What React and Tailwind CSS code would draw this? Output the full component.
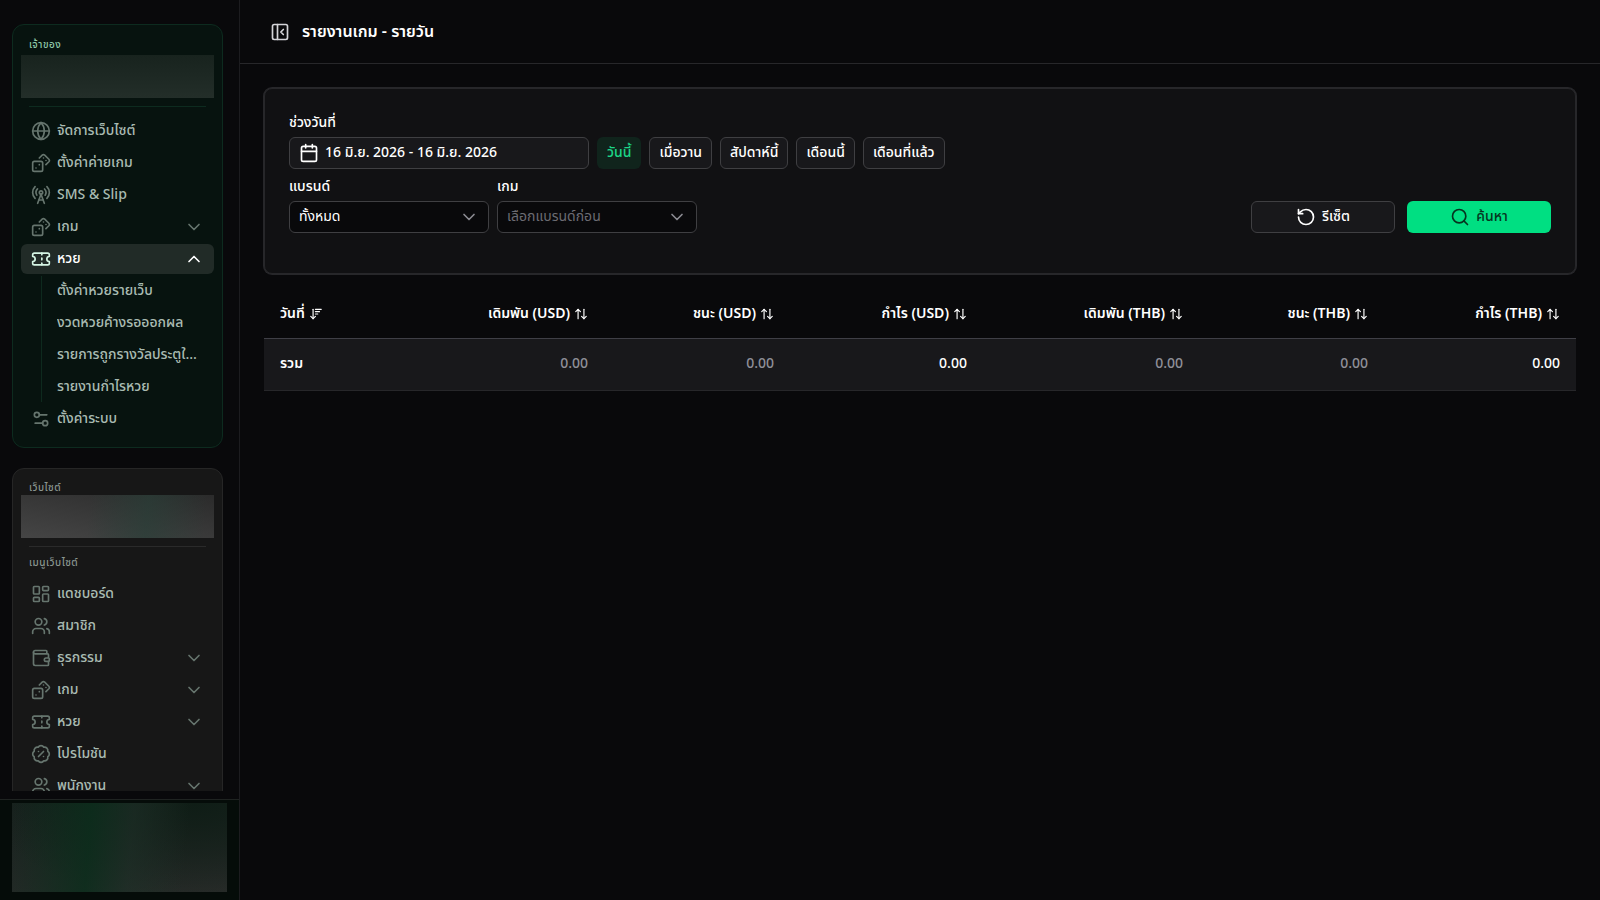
import { useState } from 'react';
import {
  ArrowDownWideNarrow,
  ArrowUpDown,
  BadgePercent,
  Calendar,
  ChevronDown,
  ChevronUp,
  Dices,
  Globe,
  LayoutDashboard,
  PanelLeftClose,
  RadioTower,
  RotateCcw,
  Search,
  Settings2,
  Ticket,
  Users,
  Wallet,
} from 'lucide-react';

const ownerMenu = [
  { label: 'จัดการเว็บไซต์', icon: Globe },
  { label: 'ตั้งค่าค่ายเกม', icon: Dices },
  { label: 'SMS & Slip', icon: RadioTower },
  { label: 'เกม', icon: Dices, expandable: true },
  {
    label: 'หวย',
    icon: Ticket,
    expandable: true,
    children: ['ตั้งค่าหวยรายเว็บ', 'งวดหวยค้างรอออกผล', 'รายการถูกรางวัลประตูใหญ่', 'รายงานกำไรหวย'],
  },
  { label: 'ตั้งค่าระบบ', icon: Settings2 },
];

const siteMenu = [
  { label: 'แดชบอร์ด', icon: LayoutDashboard },
  { label: 'สมาชิก', icon: Users },
  { label: 'ธุรกรรม', icon: Wallet, expandable: true },
  { label: 'เกม', icon: Dices, expandable: true },
  { label: 'หวย', icon: Ticket, expandable: true },
  { label: 'โปรโมชัน', icon: BadgePercent },
  { label: 'พนักงาน', icon: Users, expandable: true },
];

const datePresets = ['วันนี้', 'เมื่อวาน', 'สัปดาห์นี้', 'เดือนนี้', 'เดือนที่แล้ว'];

const columns = [
  { label: 'เดิมพัน (USD)', total: '0.00' },
  { label: 'ชนะ (USD)', total: '0.00' },
  { label: 'กำไร (USD)', total: '0.00', strong: true },
  { label: 'เดิมพัน (THB)', total: '0.00' },
  { label: 'ชนะ (THB)', total: '0.00' },
  { label: 'กำไร (THB)', total: '0.00', strong: true },
];

function MenuItem({ item }) {
  const Icon = item.icon;
  const open = Boolean(item.children);
  const Chevron = open ? ChevronUp : ChevronDown;
  const row = 'flex h-[30px] w-full items-center gap-1.5 rounded-md px-2.5 pb-px text-left';
  const content = (
    <>
      <Icon className={open ? 'size-5 shrink-0 text-[#d5f5e4]' : 'size-5 shrink-0 text-[#66756e]'} strokeWidth={2} />
      <span className="grow truncate">{item.label}</span>
      {item.expandable ? (
        <Chevron className={open ? 'size-5 shrink-0 text-white' : 'size-5 shrink-0 text-[#66756e]'} strokeWidth={2} />
      ) : null}
    </>
  );

  return (
    <li>
      {item.expandable ? (
        <button
          type="button"
          aria-expanded={open}
          className={open ? `${row} bg-[#212b27] text-white` : row}
        >
          {content}
        </button>
      ) : (
        <a href="#" className={row}>{content}</a>
      )}
      {open ? (
        <ul className="ml-5 mt-0.5 flex flex-col gap-0.5 border-l border-[#0e2a1e] pl-[15px]">
          {item.children.map((child) => (
            <li key={child}>
              <a href="#" className="flex h-[30px] items-center pb-px pr-3">
                <span className="truncate">{child}</span>
              </a>
            </li>
          ))}
        </ul>
      ) : null}
    </li>
  );
}

function Sidebar() {
  return (
    <aside className="flex w-60 shrink-0 flex-col border-r border-[#1c1c1f] bg-[#09090b] text-sm font-medium text-[#a9bbb2]">
      <div className="mb-2 min-h-0 flex-1 overflow-hidden pl-3 pr-4 pt-6">
        <nav aria-label="เจ้าของ" className="rounded-xl border border-[#0d2b1f] bg-[#07130f] px-2 pb-[13px] pt-3">
          <p className="px-2 text-[10px] leading-4 tracking-wider text-[#8fc7a8]">เจ้าของ</p>
          <div className="mt-0.5 h-[43px] bg-linear-to-b from-[#18231e] to-[#232e29]" />
          <hr className="mx-2 my-2 border-[#0d2b1f]" />
          <ul className="flex flex-col gap-0.5 pt-px">
            {ownerMenu.map((item) => <MenuItem key={item.label} item={item} />)}
          </ul>
        </nav>

        <nav aria-label="เว็บไซต์" className="mt-5 rounded-xl border border-[#262626] bg-[#171717] px-2 py-3">
          <p className="px-2 text-[10px] leading-[14px] tracking-wider text-[#8a9690]">เว็บไซต์</p>
          <div className="h-[43px] bg-[linear-gradient(95deg,transparent_35%,#27403890_65%,transparent_95%),linear-gradient(10deg,#454545,#2b2b2b)]" />
          <hr className="mx-2 my-2 border-[#2a2a2a]" />
          <p className="mb-2 px-2 text-[10px] leading-4 tracking-wider text-[#8a9690]">เมนูเว็บไซต์</p>
          <ul className="flex flex-col gap-0.5">
            {siteMenu.map((item) => <MenuItem key={item.label} item={item} />)}
          </ul>
        </nav>
      </div>

      <div className="border-t border-[#1f2321] bg-[#050c09] px-3 pb-2 pt-[3px]">
        <div className="h-[89px] bg-[linear-gradient(95deg,transparent_0%,#0b2e1ccc_36%,#1d302799_55%,transparent_80%),radial-gradient(ellipse_at_85%_0%,#0f1d16_0%,transparent_80%),linear-gradient(170deg,#18211e,#292c2a)]" />
      </div>
    </aside>
  );
}

function SelectField({ id, label, options, muted }) {
  return (
    <div className="flex w-[200px] flex-col gap-1">
      <label htmlFor={id} className="font-medium">{label}</label>
      <div className="grid items-center">
        <select
          id={id}
          className={
            muted
              ? 'col-start-1 row-start-1 h-8 w-full appearance-none rounded-md border border-[#3f3f42] bg-[#09090b] px-[9px] pb-px text-[#6c6c73]'
              : 'col-start-1 row-start-1 h-8 w-full appearance-none rounded-md border border-[#3f3f42] bg-[#09090b] px-[9px] pb-px text-white'
          }
        >
          {options.map((option) => <option key={option}>{option}</option>)}
        </select>
        <ChevronDown
          className="pointer-events-none col-start-1 row-start-1 mr-2.5 size-5 justify-self-end text-[#8b8b92]"
          strokeWidth={2}
        />
      </div>
    </div>
  );
}

function Filters() {
  const [preset, setPreset] = useState('วันนี้');

  return (
    <form
      className="rounded-lg border border-[#27272a] bg-[#111113] px-6 pb-10 pt-6 ring-1 ring-[#27272a]"
      onSubmit={(e) => e.preventDefault()}
    >
      <label htmlFor="date-range" className="block font-medium">ช่วงวันที่</label>
      <div className="mt-1 flex flex-wrap gap-2">
        <button
          id="date-range"
          type="button"
          className="flex h-8 w-[300px] items-center gap-1.5 rounded-md border border-[#3f3f42] bg-[#18181b] px-[9px] font-medium"
        >
          <Calendar className="size-5" strokeWidth={2} />
          16 มิ.ย. 2026 - 16 มิ.ย. 2026
        </button>
        {datePresets.map((name) => (
          <button
            key={name}
            type="button"
            onClick={() => setPreset(name)}
            className={
              name === preset
                ? 'h-8 rounded-md bg-[#10241c] px-2.5 font-medium text-[#1cd587]'
                : 'h-8 rounded-md border border-[#3f3f42] bg-[#18181b] px-[9px] font-medium'
            }
          >
            {name}
          </button>
        ))}
      </div>

      <div className="mt-2 flex flex-wrap items-end gap-2">
        <SelectField id="brand" label="แบรนด์" options={['ทั้งหมด']} />
        <SelectField id="game" label="เกม" options={['เลือกแบรนด์ก่อน']} muted />
        <div className="ml-auto flex gap-3">
          <button
            type="reset"
            className="flex h-8 w-36 items-center justify-center gap-1.5 rounded-md border border-[#3f3f42] bg-[#18181b] font-medium"
          >
            <RotateCcw className="size-5" strokeWidth={2} />
            รีเซ็ต
          </button>
          <button
            type="submit"
            className="flex h-8 w-36 items-center justify-center gap-1.5 rounded-md bg-[#00df82] font-medium text-[#06341f]"
          >
            <Search className="size-5" strokeWidth={2} />
            ค้นหา
          </button>
        </div>
      </div>
    </form>
  );
}

function ReportTable() {
  return (
    <table className="mt-4 w-full border-collapse">
      <thead>
        <tr className="border-b border-[#3f3f46]">
          <th scope="col" className="px-4 py-3.5 text-left font-semibold">
            <button type="button" className="inline-flex items-center gap-1 whitespace-nowrap">
              วันที่
              <ArrowDownWideNarrow className="size-3.5" strokeWidth={2} />
            </button>
          </th>
          {columns.map((column) => (
            <th key={column.label} scope="col" className="px-4 py-3.5 text-right font-semibold">
              <button type="button" className="inline-flex items-center gap-1 whitespace-nowrap">
                {column.label}
                <ArrowUpDown className="size-3.5" strokeWidth={2} />
              </button>
            </th>
          ))}
        </tr>
      </thead>
      <tbody>
        <tr className="border-b border-[#27272a] bg-[#18181b]">
          <th scope="row" className="px-4 pb-4 pt-[15px] text-left font-semibold">รวม</th>
          {columns.map((column) => (
            <td
              key={column.label}
              className={
                column.strong
                  ? 'px-4 pb-4 pt-[15px] text-right font-medium text-white'
                  : 'px-4 pb-4 pt-[15px] text-right font-medium text-[#8f8f98]'
              }
            >
              {column.total}
            </td>
          ))}
        </tr>
      </tbody>
    </table>
  );
}

export default function App() {
  return (
    <div className="flex h-screen bg-[#09090b] font-['Noto_Sans_Thai','Noto_Sans',sans-serif] text-sm text-white">
      <Sidebar />
      <main className="min-w-0 flex-1 overflow-auto">
        <header className="flex h-16 items-center gap-3 border-b border-[#27272a] px-[30px]">
          <button type="button" aria-label="ซ่อนเมนู">
            <PanelLeftClose className="size-5 text-[#d4d4d8]" strokeWidth={2} />
          </button>
          <h1 className="text-base font-semibold">รายงานเกม - รายวัน</h1>
        </header>
        <div className="p-6">
          <Filters />
          <ReportTable />
        </div>
      </main>
    </div>
  );
}
